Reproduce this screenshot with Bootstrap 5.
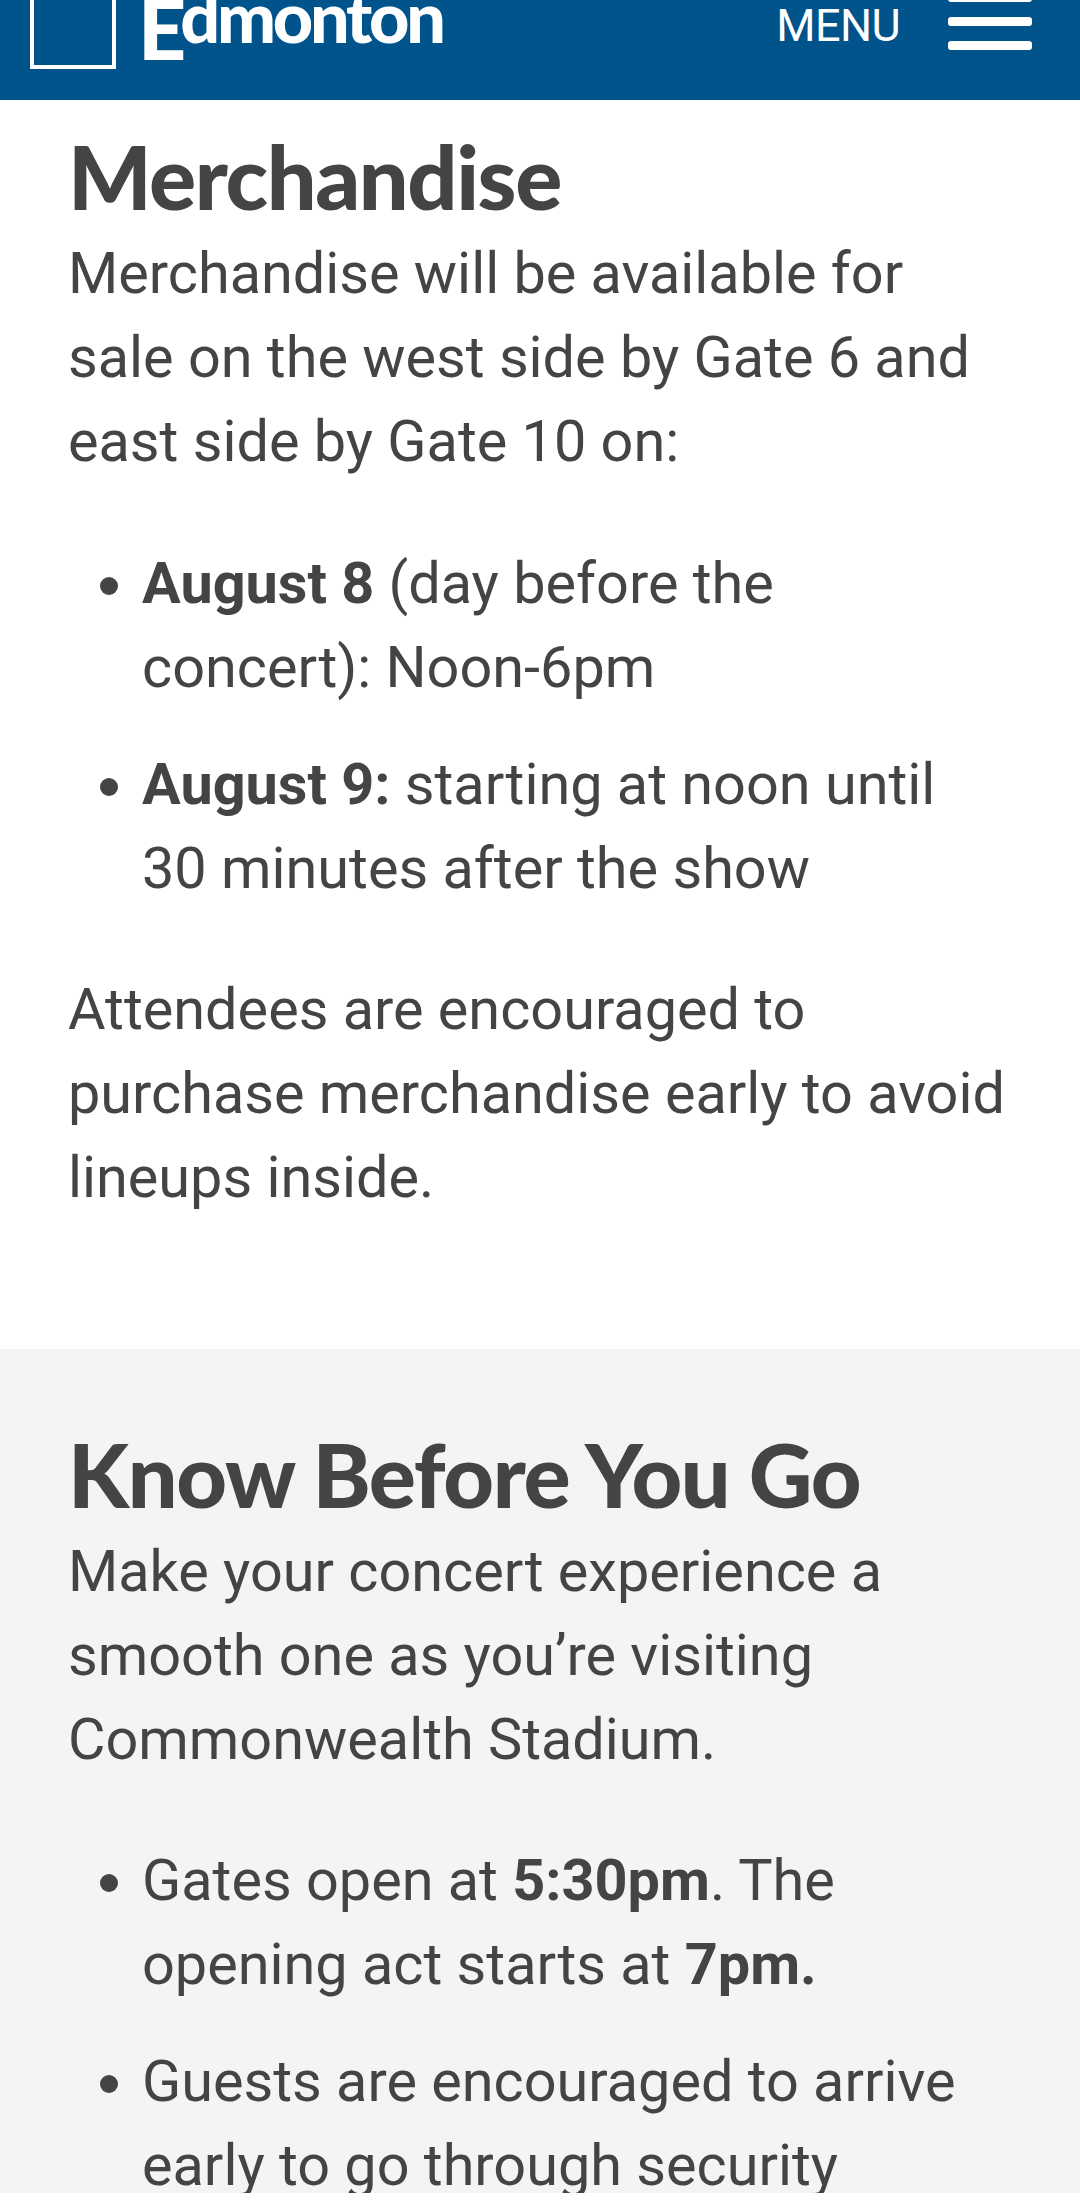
<!DOCTYPE html>
<html lang="en"><head><meta charset="utf-8">
<title>Merchandise</title>
<link href="https://cdn.jsdelivr.net/npm/bootstrap@5.3.0/dist/css/bootstrap.min.css" rel="stylesheet">
<style>
html,body{margin:0;background:#fff}
.page-clip{height:2193px;overflow:hidden;font-family:Roboto,sans-serif;font-size:57.6px;line-height:84px;color:#444;}
.top-bar{height:100px;background:#00548b;overflow:hidden;padding:0 48px 0 30px;}
.logo-box{width:86px;height:110px;border:4px solid #fff;margin-bottom:31px;flex:none}
.logo-e{font-family:Lato,sans-serif;font-weight:900;font-size:84px;line-height:96px;color:#fff;margin:0 -6px 24px 22px;}
.logo-rest{font-family:Lato,sans-serif;font-weight:900;font-size:70px;line-height:70px;color:#fff;margin-bottom:49px;letter-spacing:-3.2px;}
.menu-word{font-size:45px;line-height:50px;font-weight:400;letter-spacing:-.6px;color:#fff;margin-bottom:49px;}
.burger{width:84px;margin:0 0 50px 48px;gap:15px;flex:none}
.burger span{display:block;height:9px;background:#fff;border-radius:3px;}
.sect{padding:20px 68px 71px 68px;}
.sect-gray{background:#f3f4f6;padding-top:69px;}
.sect h2{font-family:Lato,sans-serif;font-weight:900;font-size:88px;line-height:112px;letter-spacing:-1.4px;color:#444;margin:0;}
.sect p{margin:0 0 57.6px;}
.sect ul{margin:0 0 57.6px;padding-left:74px;}
.sect li{margin-bottom:33px;}
.sect li:last-child{margin-bottom:0}
</style></head>
<body>
<div class="page-clip">
<header class="top-bar d-flex align-items-end">
  <div class="logo-box"></div>
  <div class="logo-e">E</div>
  <div class="logo-rest">dmonton</div>
  <div class="menu-word ms-auto">MENU</div>
  <div class="burger d-flex flex-column"><span></span><span></span><span></span></div>
</header>
<section class="sect">
  <h2>Merchandise</h2>
  <p>Merchandise will be available for sale on the west side by Gate 6 and east side by Gate 10 on:</p>
  <ul>
    <li><strong>August 8</strong> (day before the concert): Noon-6pm</li>
    <li><strong>August 9:</strong> starting at noon until 30 minutes after the show</li>
  </ul>
  <p>Attendees are encouraged to purchase merchandise early to avoid lineups inside.</p>
</section>
<section class="sect sect-gray">
  <h2>Know Before You Go</h2>
  <p>Make your concert experience a smooth one as you’re visiting Commonwealth Stadium.</p>
  <ul>
    <li>Gates open at <strong>5:30pm</strong>. The opening act starts at <strong>7pm.</strong></li>
    <li>Guests are encouraged to arrive early to go through security</li>
  </ul>
</section>
</div>
<script src="https://cdn.jsdelivr.net/npm/bootstrap@5.3.0/dist/js/bootstrap.bundle.min.js"></script>
</body></html>
